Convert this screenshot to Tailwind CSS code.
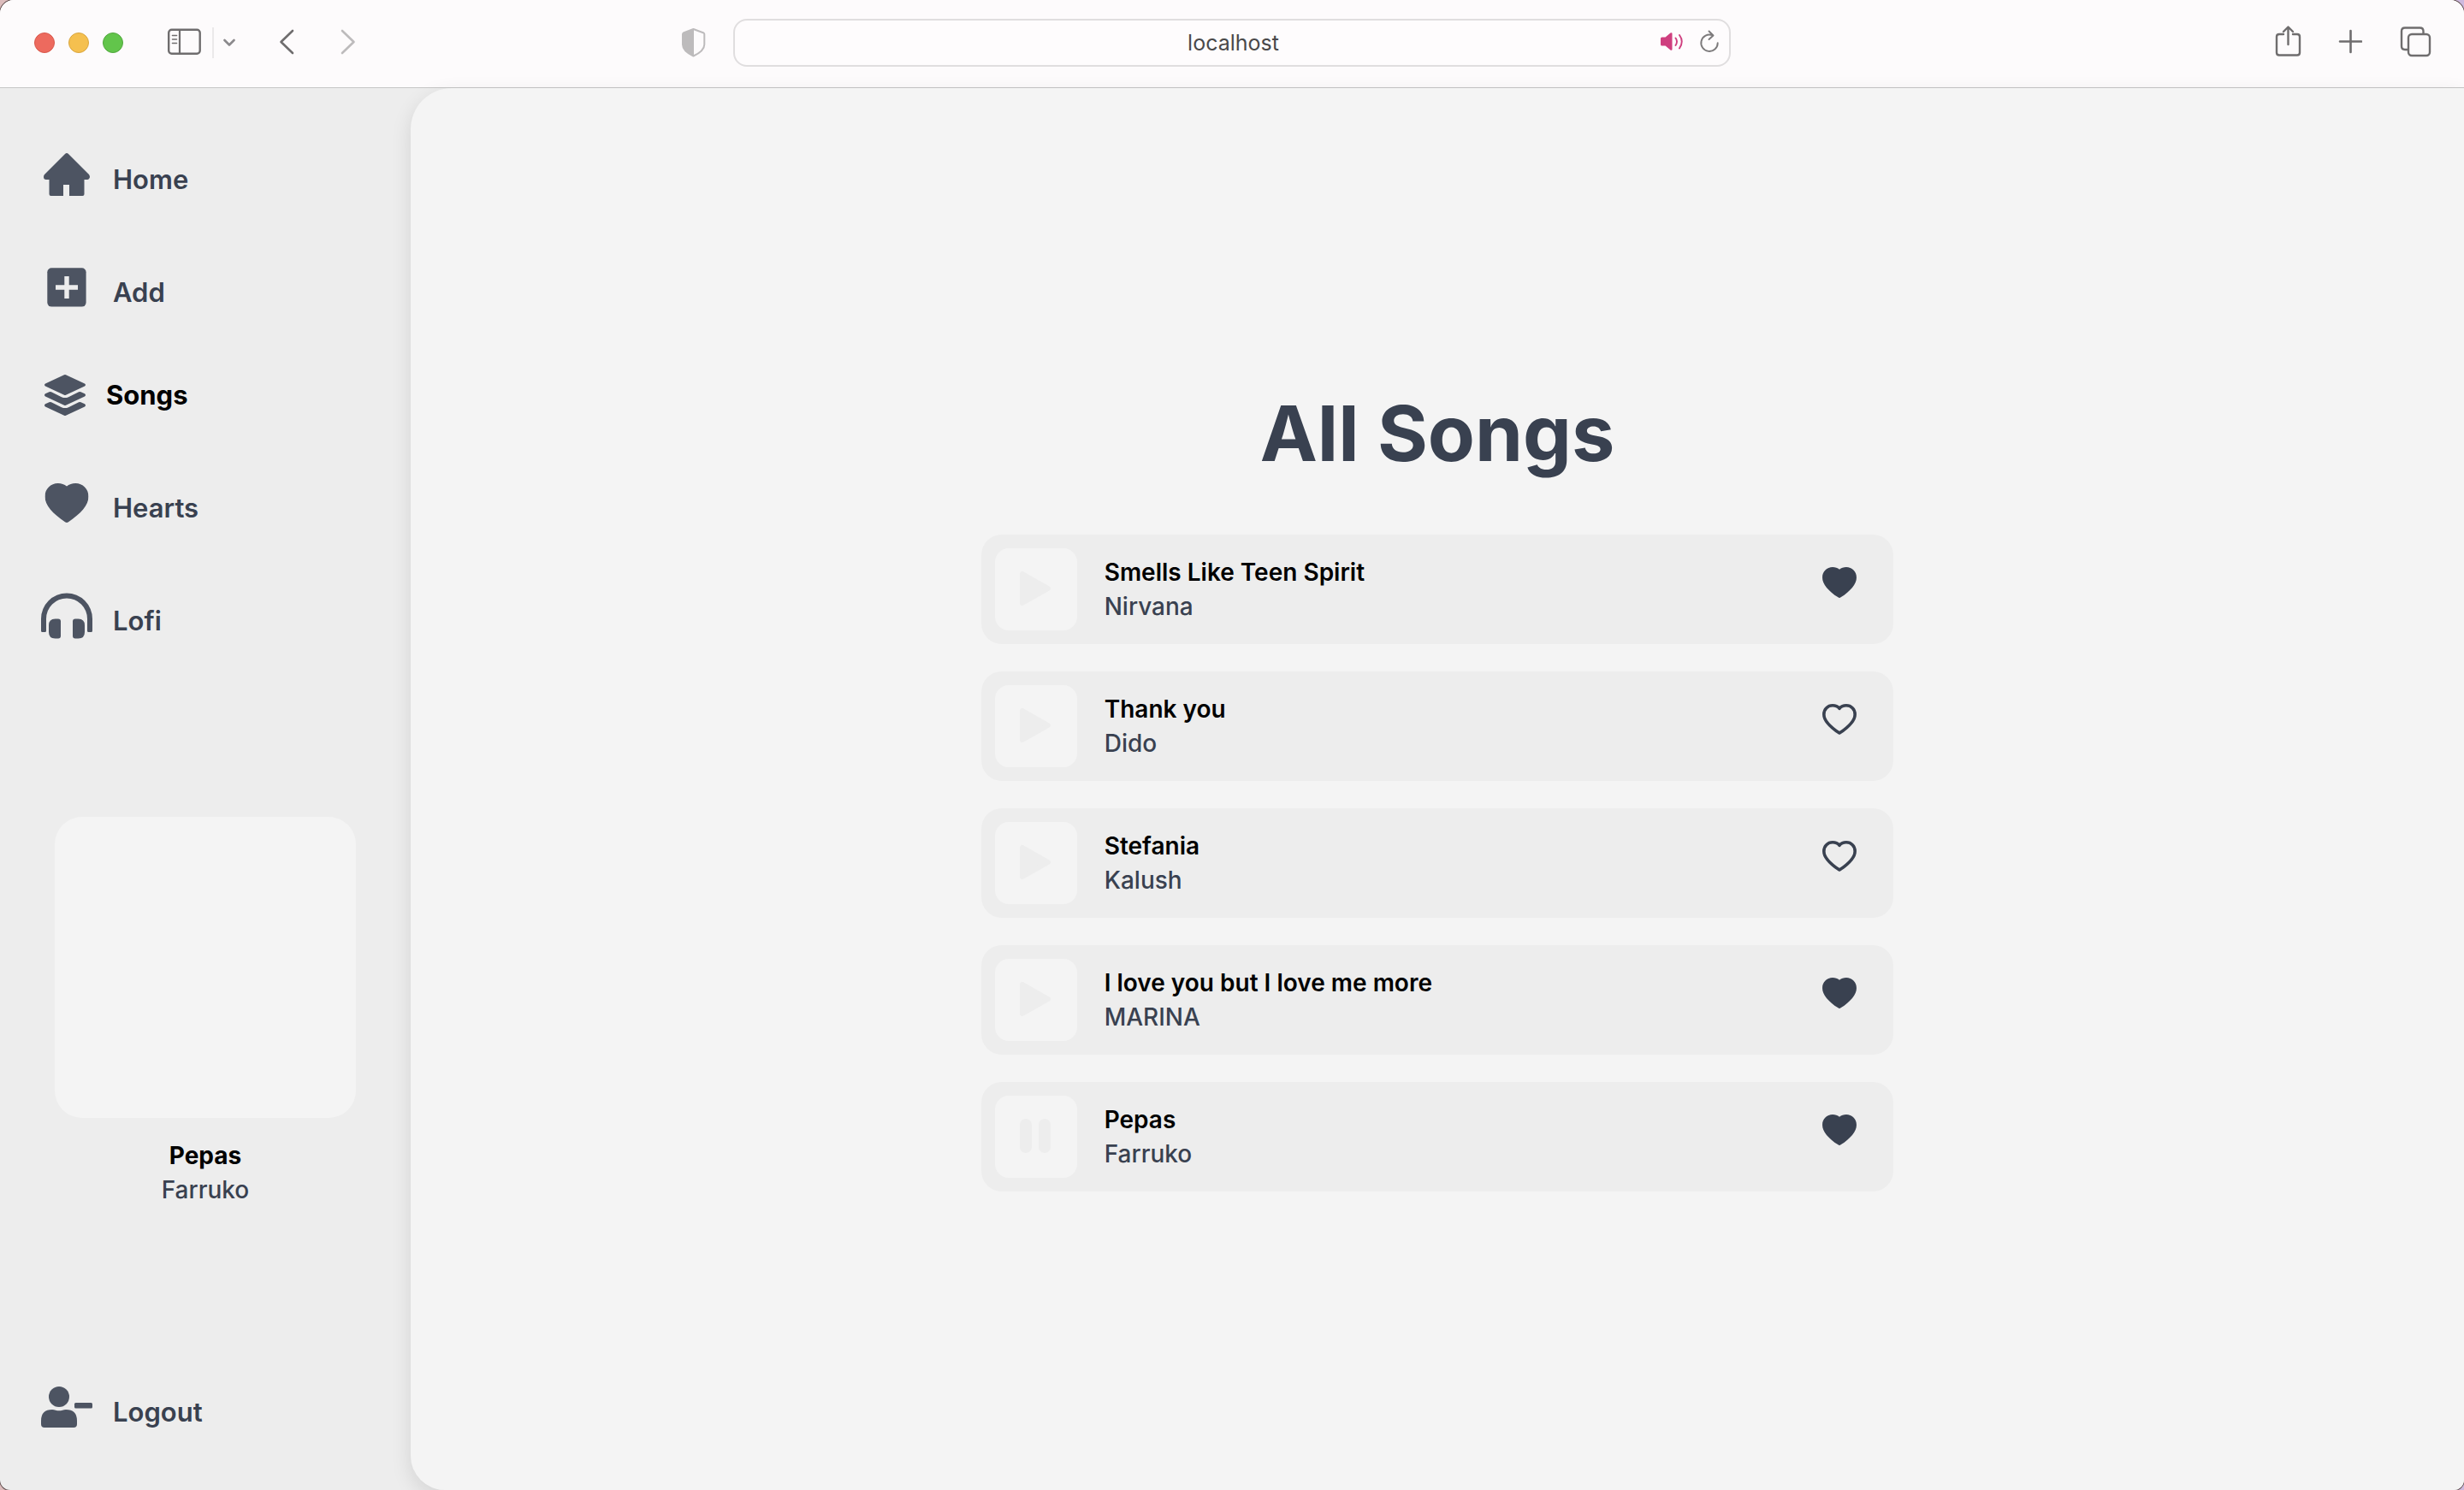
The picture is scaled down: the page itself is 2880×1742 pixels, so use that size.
<!DOCTYPE html>
<html lang="en">
<head>
<meta charset="utf-8">
<meta name="viewport" content="width=device-width, initial-scale=1">
<title>All Songs</title>
<script src="https://cdn.jsdelivr.net/npm/@tailwindcss/browser@4"></script>
</head>
<body class="bg-linear-to-r from-[#dcbcbc] to-[#cdb9de] font-['Inter','Liberation_Sans',sans-serif]">
<svg class="hidden" aria-hidden="true">
  <symbol id="heart" viewBox="0 0 51 46"><path d="M25.5 46Q24.500 46 23.500 45.200C9 35.500 0 25.500 0 15.500C0 6.500 6.800 0 15.300 0C19.200 0 22.800 1.200 25.500 3.600C28.200 1.200 31.800 0 35.700 0C44.200 0 51 6.500 51 15.500C51 25.500 42 35.500 27.500 45.200Q26.500 46 25.500 46Z"/></symbol>
  <symbol id="heart-line" viewBox="0 0 51 46"><path fill="none" stroke="currentColor" stroke-width="4.600" stroke-linejoin="round" d="M25.500 43.500C10.500 33.500 2.300 24.500 2.300 15.500C2.300 7.800 8 2.300 15.300 2.300C19.400 2.300 23 3.800 25.500 6.800C28 3.800 31.600 2.300 35.700 2.300C43 2.300 48.700 7.800 48.700 15.500C48.700 24.500 40.500 33.500 25.500 43.500Z"/></symbol>
  <symbol id="play" viewBox="0 0 96 96"><path fill="currentColor" stroke="currentColor" stroke-width="6" stroke-linejoin="round" d="M32 30V64L62 47Z"/></symbol>
  <symbol id="pause" viewBox="0 0 96 96"><rect x="29" y="27" width="14" height="40" rx="7" fill="currentColor"/><rect x="51" y="27" width="14" height="40" rx="7" fill="currentColor"/></symbol>
</svg>
<div class="flex min-h-screen flex-col overflow-hidden rounded-t-2xl rounded-b-xl bg-[#ededed] ring-1 ring-[#5f4d4d]">

  <header class="grid h-[103px] shrink-0 grid-cols-[1fr_minmax(0,1166px)_1fr] items-center border-b border-[#c6c6c6] bg-[#fdfbfc] pb-[2px]">
    <div class="flex items-center pl-10">
      <div class="flex gap-4">
        <button aria-label="Close" class="size-6 rounded-full border border-[#d8584c] bg-[#ed6a5e]"></button>
        <button aria-label="Minimize" class="size-6 rounded-full border border-[#d9a640] bg-[#f5c04f]"></button>
        <button aria-label="Zoom" class="size-6 rounded-full border border-[#51a73e] bg-[#62c54b]"></button>
      </div>
      <button aria-label="Sidebar" class="ml-[52px]">
        <svg class="h-10 w-10 text-[#6f6d6e]" viewBox="196 30 40 40" fill="none" stroke="currentColor"><rect x="197.200" y="34.700" width="36.500" height="28" rx="3.500" stroke-width="2.400"/><path d="M210 35V63" stroke-width="2.200"/><path d="M201.500 41.500H206.500M201.500 46H206.500M201.500 50.500H206.500" stroke-width="1.600" stroke-linecap="round"/></svg>
      </button>
      <div class="ml-3 h-9 w-[2px] bg-[#ebe9ea]"></div>
      <button aria-label="Tab groups" class="ml-[11px]">
        <svg class="h-10 w-[14px] text-[#8b898c]" viewBox="261 30 14 40" fill="none" stroke="currentColor" stroke-width="2.600" stroke-linecap="round" stroke-linejoin="round"><path d="M262.500 47L268 52.500L273.500 47"/></svg>
      </button>
      <button aria-label="Back" class="ml-[51px]">
        <svg class="h-10 w-[18px] text-[#6f6d6e]" viewBox="326 30 18 40" fill="none" stroke="currentColor" stroke-width="2.600" stroke-linecap="round" stroke-linejoin="round"><path d="M342 36L328.500 49L342 62"/></svg>
      </button>
      <button aria-label="Forward" class="ml-[54px]">
        <svg class="h-10 w-[18px] text-[#bdbbbc]" viewBox="398 30 18 40" fill="none" stroke="currentColor" stroke-width="2.600" stroke-linecap="round" stroke-linejoin="round"><path d="M400 36L413.500 49L400 62"/></svg>
      </button>
      <button aria-label="Privacy report" class="mr-8 ml-auto">
        <svg class="h-10 w-7 text-[#bdbbbc]" viewBox="797 30 28 40"><path fill="none" stroke="currentColor" stroke-width="2" stroke-linejoin="round" d="M810.500 34L822.500 38.500Q823.300 39 823.300 40V52C823.300 58 818 62 810.500 65.500C803 62 798 58 798 52V40Q798 39 798.800 38.500Z"/><path fill="currentColor" d="M811 34L798 38.500V52C798 58 803 62 811 65.500Z"/></svg>
      </button>
    </div>

    <div class="flex h-14 items-center rounded-2xl border-2 border-[#e0dedf] bg-[#fefcfd] pr-[11px] pl-[84px]">
      <input aria-label="Address" value="localhost" class="h-10 min-w-0 flex-1 bg-transparent text-center text-[25px] text-[#4a494a] outline-none">
      <button aria-label="Mute tab">
        <svg class="h-10 w-7 text-[#cf3f7f]" viewBox="1940 30 28 40" fill="none" stroke="currentColor" stroke-width="1.900" stroke-linecap="round"><path fill="currentColor" stroke="none" d="M1941 45Q1941 43.500 1942.500 43.500H1946.500L1952.500 38.500Q1954.500 37.500 1954.500 39.500V57.500Q1954.500 59.500 1952.500 58.500L1946.500 53.500H1942.500Q1941 53.500 1941 52Z"/><path d="M1958.500 44.500Q1961.500 48.500 1958.500 53M1963 41Q1968.500 48.500 1963 56.500"/></svg>
      </button>
      <button aria-label="Reload" class="ml-[18px]">
        <svg class="h-10 w-6 text-[#7c7a7b]" viewBox="1986 30 24 40" fill="none" stroke="currentColor" stroke-width="1.900" stroke-linecap="round" stroke-linejoin="round"><path d="M2001.500 41.200A9.700 9.700 0 1 0 2007.700 50.200M1997.500 36.500L2002.500 41.500L1997.500 46"/></svg>
      </button>
    </div>

    <div class="flex items-center justify-end pr-[38px]">
      <button aria-label="Share">
        <svg class="h-10 w-8 text-[#6f6d6e]" viewBox="2659 30 32 40" fill="none" stroke="currentColor" stroke-width="2.400" stroke-linecap="round" stroke-linejoin="round"><path d="M2669 40H2664Q2661 40 2661 43V61.500Q2661 64.500 2664 64.500H2685Q2688 64.500 2688 61.500V43Q2688 40 2685 40H2680M2674.500 52V32M2669 37L2674.500 31.500L2680 37"/></svg>
      </button>
      <button aria-label="New tab" class="ml-[42px]">
        <svg class="h-10 w-7 text-[#6f6d6e]" viewBox="2733 30 28 40" stroke="currentColor" stroke-width="2.600" stroke-linecap="round"><path d="M2747.500 36V61M2735 48.500H2760"/></svg>
      </button>
      <button aria-label="Tab overview" class="ml-[43px]">
        <svg class="h-10 w-[38px] text-[#6f6d6e]" viewBox="2804 30 38 40" fill="none" stroke="currentColor" stroke-width="2.400"><path d="M2814.500 58H2811Q2807 58 2807 54V36.500Q2807 32.500 2811 32.500H2828.500Q2832.500 32.500 2832.500 36.500V39.500"/><rect x="2815" y="40" width="25" height="25" rx="4"/></svg>
      </button>
    </div>
  </header>

  <div class="flex flex-1">
    <aside class="flex w-1/6 flex-col justify-between px-12 pt-[71px] pb-[67px] text-[31px] leading-[48px] font-semibold text-[#394150]">
      <nav class="flex flex-col gap-[72px]">
        <a href="#" class="flex items-end gap-6">
          <svg class="size-15 fill-[#4d5462]" viewBox="48 174 60 60"><path d="M76 180Q78 178 80 180L104 204Q106 207 104 209Q103.500 210 102 210H98.500V227Q98.500 229 96.500 229H81V216H74V229H59.500Q57.500 229 57.500 227V210H54Q51 210 51 207Q51 205 52 204Z"/></svg>
          Home
        </a>
        <a href="#" class="flex items-end gap-6">
          <svg class="size-15" viewBox="48 306 60 60"><rect x="55.300" y="313.300" width="45.300" height="45.300" rx="5" fill="#4d5462"/><path d="M65 336H91M78 323V349" stroke="#ededed" stroke-width="5.400"/></svg>
          Add
        </a>
        <a href="#" aria-current="page" class="flex items-end gap-5 font-bold text-black">
          <svg class="h-12 w-14 fill-[#4d5462]" viewBox="48 438 56 48"><path d="M75 438.300Q76 437.800 77 438.300L99 448.500Q101 450 99 451.500L77 461.700Q76 462.200 75 461.700L53 451.500Q51 450 53 448.500Z"/><path d="M57.500 458.200Q58.500 457.600 60 458.300L72 464.200Q76 466 80 464.200L92 458.300Q93.500 457.600 94.500 458.200L99 460.300Q101 462 99 463.500L77 473.700Q76 474.200 75 473.700L53 463.500Q51 462 53 460.300Z"/><path d="M57.500 470.200Q58.500 469.600 60 470.300L72 476.200Q76 478 80 476.200L92 470.300Q93.500 469.600 94.500 470.200L99 472.300Q101 474 99 475.500L77 485.700Q76 486.200 75 485.700L53 475.500Q51 474 53 472.300Z"/></svg>
          Songs
        </a>
        <a href="#" class="flex items-end gap-6">
          <svg class="size-15 fill-[#4d5462]" viewBox="48 558 60 60"><use href="#heart" x="52.500" y="565" width="51" height="46"/></svg>
          Hearts
        </a>
        <a href="#" class="flex items-end gap-6">
          <svg class="size-15 fill-[#4d5462]" viewBox="48 690 60 60"><path d="M48 723.500A30 30 0 0 1 108 723.500V737.500Q108 739 106.500 739H103.500Q102 739 102 737.500V723.500A24 24 0 0 0 54 723.500V737.500Q54 739 52.500 739H49.500Q48 739 48 737.500Z"/><path d="M57 731Q57 723.500 64.500 723.500H68Q71 723.500 71 726.500V743.500Q71 746.500 68 746.500H64.500Q57 746.500 57 739ZM99 731Q99 723.500 91.500 723.500H88Q85 723.500 85 726.500V743.500Q85 746.500 88 746.500H91.500Q99 746.500 99 739Z"/></svg>
          Lofi
        </a>
      </nav>

      <section aria-label="Now playing" class="px-4 text-center text-[28px] leading-10">
        <div class="aspect-square rounded-[32px] bg-[#f4f4f4]"></div>
        <p class="mt-6 font-bold text-black">Pepas</p>
        <p class="font-medium">Farruko</p>
      </section>

      <a href="#" class="flex items-end gap-6">
        <svg class="size-15 fill-[#4d5462]" viewBox="48 1616 60 60"><circle cx="69" cy="1634" r="12"/><path d="M52 1670Q48 1670 48 1666V1662Q48 1649 61 1649Q63 1649 65 1649.700Q69 1651 73 1649.700Q75 1649 77 1649Q90 1649 90 1662V1666Q90 1670 86 1670Z"/><rect x="87" y="1641" width="21" height="6.500" rx="1.500"/></svg>
        Logout
      </a>
    </aside>

    <main class="flex flex-1 flex-col items-center justify-center rounded-tl-[48px] rounded-bl-[40px] bg-[#f4f4f4] pb-[2px] text-[#394150] shadow-[0_8px_24px_rgba(0,0,0,0.11)]">
      <h1 class="mb-[62px] text-[90px] leading-[112px] font-bold">All Songs</h1>
      <ul class="flex w-4/9 flex-col gap-8 text-[28px] leading-10">
        <li class="flex items-center rounded-3xl bg-[#ededed] p-4 pr-10">
          <button aria-label="Play" class="mr-8 size-24 rounded-2xl bg-[#f4f4f4] text-[#ededed]"><svg class="size-24"><use href="#play"/></svg></button>
          <div class="flex-1"><p class="font-semibold text-black">Smells Like Teen Spirit</p><p class="font-medium">Nirvana</p></div>
          <button aria-label="Unlike" class="pb-4"><svg class="h-9 w-[46px] fill-current"><use href="#heart"/></svg></button>
        </li>
        <li class="flex items-center rounded-3xl bg-[#ededed] p-4 pr-10">
          <button aria-label="Play" class="mr-8 size-24 rounded-2xl bg-[#f4f4f4] text-[#ededed]"><svg class="size-24"><use href="#play"/></svg></button>
          <div class="flex-1"><p class="font-semibold text-black">Thank you</p><p class="font-medium">Dido</p></div>
          <button aria-label="Like" class="pb-4"><svg class="h-9 w-[46px]"><use href="#heart-line"/></svg></button>
        </li>
        <li class="flex items-center rounded-3xl bg-[#ededed] p-4 pr-10">
          <button aria-label="Play" class="mr-8 size-24 rounded-2xl bg-[#f4f4f4] text-[#ededed]"><svg class="size-24"><use href="#play"/></svg></button>
          <div class="flex-1"><p class="font-semibold text-black">Stefania</p><p class="font-medium">Kalush</p></div>
          <button aria-label="Like" class="pb-4"><svg class="h-9 w-[46px]"><use href="#heart-line"/></svg></button>
        </li>
        <li class="flex items-center rounded-3xl bg-[#ededed] p-4 pr-10">
          <button aria-label="Play" class="mr-8 size-24 rounded-2xl bg-[#f4f4f4] text-[#ededed]"><svg class="size-24"><use href="#play"/></svg></button>
          <div class="flex-1"><p class="font-semibold text-black">I love you but I love me more</p><p class="font-medium">MARINA</p></div>
          <button aria-label="Unlike" class="pb-4"><svg class="h-9 w-[46px] fill-current"><use href="#heart"/></svg></button>
        </li>
        <li class="flex items-center rounded-3xl bg-[#ededed] p-4 pr-10">
          <button aria-label="Pause" class="mr-8 size-24 rounded-2xl bg-[#f4f4f4] text-[#ededed]"><svg class="size-24"><use href="#pause"/></svg></button>
          <div class="flex-1"><p class="font-semibold text-black">Pepas</p><p class="font-medium">Farruko</p></div>
          <button aria-label="Unlike" class="pb-4"><svg class="h-9 w-[46px] fill-current"><use href="#heart"/></svg></button>
        </li>
      </ul>
    </main>
  </div>
</div>
</body>
</html>
